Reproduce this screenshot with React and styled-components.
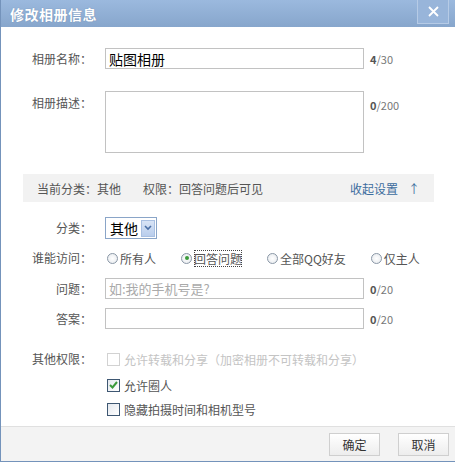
import React from 'react';
import styled, { createGlobalStyle } from 'styled-components';

const GlobalStyle = createGlobalStyle`
  html, body { margin: 0; padding: 0; background: #fff; }
  body { font-family: 'Noto Sans CJK SC', 'DejaVu Sans', sans-serif; }
`;

const Dialog = styled.div`
  width: 455px;
  height: 462px;
  box-sizing: border-box;
  border-left: 1px solid #7493bb;
  border-bottom: 1px solid #7493bb;
  display: flex;
  flex-direction: column;
  background: #fff;
  font-size: 12px;
  color: #555;
`;

const TitleBar = styled.div`
  height: 27px;
  flex: none;
  background: linear-gradient(#9bb9de, #87a6cc);
  display: flex;
  align-items: center;
  justify-content: space-between;
  padding: 0 6px 0 9px;
`;

const Title = styled.h1`
  margin: 0;
  font-size: 14px;
  font-weight: bold;
  color: #fff;
  letter-spacing: 0.5px;
  text-shadow: 0 0 1px rgba(60, 90, 130, 0.5);
`;

const CloseButton = styled.div`
  width: 32px;
  height: 24px;
  margin-top: -3px;
  box-sizing: border-box;
  border: 1px solid #b6cbe6;
  border-top: none;
  background: #98b5da;
  display: flex;
  align-items: center;
  justify-content: center;
`;

const Body = styled.div`
  flex: 1;
  padding-top: 21px;
`;

const Row = styled.div`
  display: grid;
  grid-template-columns: 91px 259px auto;
  column-gap: 13px;
  align-items: ${(p) => (p.top ? 'start' : 'center')};
  margin-top: ${(p) => p.gap || 0}px;
  min-height: ${(p) => p.h || 20}px;
`;

const Label = styled.label`
  text-align: right;
  font-size: 12px;
  color: #555;
  white-space: nowrap;
  line-height: 20px;
  padding-top: ${(p) => (p.top ? 2 : 0)}px;
`;

const TextInput = styled.div`
  height: 21px;
  box-sizing: border-box;
  border: 1px solid #c2c2c2;
  padding: 0 3px;
  display: flex;
  align-items: center;
  font-size: ${(p) => (p.placeholder ? 13 : 14)}px;
  color: ${(p) => (p.placeholder ? '#aaa' : '#000')};
`;

const TextArea = styled.div`
  height: 62px;
  box-sizing: border-box;
  border: 1px solid #c2c2c2;
`;

const Counter = styled.span`
  font-size: 11px;
  color: #777;
  margin-left: -7px;
  padding-top: ${(p) => (p.top ? 6 : 0)}px;
  b { color: #555; }
`;

const InfoBar = styled.div`
  margin: 21px 21px 0 22px;
  height: 28px;
  background: #f2f2f2;
  display: flex;
  align-items: center;
  padding: 0 14px;
  color: #555;
  font-size: 12px;
`;

const InfoText = styled.span`
  margin-right: ${(p) => p.mr || 0}px;
`;

const Toggle = styled.a`
  margin-left: auto;
  color: #3d6d9e;
  font-size: 12px;
  text-decoration: none;
  span { margin-left: 10px; }
`;

const Select = styled.div`
  width: 52px;
  height: 22px;
  box-sizing: border-box;
  border: 1px solid #8aa5c8;
  display: flex;
  align-items: center;
  justify-content: space-between;
  padding: 0 1px 0 4px;
  font-size: 14px;
  color: #000;
`;

const SelectArrow = styled.div`
  width: 14px;
  height: 17px;
  background: linear-gradient(#d8e4f6, #b9cdec);
  border: 1px solid #a9c0e2;
  box-sizing: border-box;
  display: flex;
  align-items: center;
  justify-content: center;
`;

const Options = styled.div`
  display: flex;
  gap: 25px;
  padding-left: 2px;
  white-space: nowrap;
`;

const Option = styled.span`
  display: flex;
  align-items: center;
  gap: 2px;
  color: #555;
`;

const Circle = styled.span`
  width: 11px;
  height: 11px;
  box-sizing: border-box;
  border-radius: 50%;
  border: 1px solid #8a97a6;
  background: radial-gradient(#fff, #e4e8ec);
  display: inline-flex;
  align-items: center;
  justify-content: center;
  &::after {
    content: '';
    width: 4px;
    height: 4px;
    border-radius: 50%;
    background: ${(p) => (p.on ? '#3a9a3a' : 'transparent')};
  }
`;

const Focus = styled.span`
  outline: 1px dotted #444;
  outline-offset: -1px;
  color: #555;
`;

const CheckList = styled.div`
  display: flex;
  flex-direction: column;
  grid-column: 2 / 4;
  padding-left: 2px;
`;

const CheckRow = styled.div`
  display: flex;
  align-items: center;
  gap: 4px;
  height: 20px;
  margin-top: ${(p) => p.gap || 0}px;
  color: ${(p) => (p.disabled ? '#c4c4c4' : '#555')};
  white-space: nowrap;
`;

const Box = styled.span`
  width: 13px;
  height: 13px;
  box-sizing: border-box;
  border: 1px solid ${(p) => (p.disabled ? '#d2d2d2' : '#3e5772')};
  background: ${(p) => (p.disabled ? '#fff' : 'linear-gradient(135deg, #e4e8ee, #fff)')};
  display: inline-flex;
  align-items: center;
  justify-content: center;
`;

const Footer = styled.div`
  height: 34px;
  flex: none;
  background: #f3f3f3;
  border-top: 1px solid #e0e0e0;
  display: flex;
  justify-content: flex-end;
  align-items: center;
  gap: 18px;
  padding-right: 6px;
`;

const Button = styled.button`
  width: 51px;
  height: 23px;
  border: 1px solid #cfcfcf;
  background: linear-gradient(#fff, #ededed);
  font-family: inherit;
  font-size: 12px;
  color: #333;
  padding: 0;
`;

const Radio = ({ label, on, focus }) => (
  <Option>
    <Circle on={on} />
    {focus ? <Focus>{label}</Focus> : label}
  </Option>
);

export default function App() {
  return (
    <>
      <GlobalStyle />
      <Dialog>
        <TitleBar>
          <Title>修改相册信息</Title>
          <CloseButton>
            <svg width="11" height="11" viewBox="0 0 11 11">
              <path d="M1 1L10 10M10 1L1 10" stroke="#fff" strokeWidth="1.8" />
            </svg>
          </CloseButton>
        </TitleBar>

        <Body>
          <Row h={21}>
            <Label>相册名称：</Label>
            <TextInput>贴图相册</TextInput>
            <Counter><b>4</b>/30</Counter>
          </Row>
          <Row gap={22} top>
            <Label top>相册描述：</Label>
            <TextArea />
            <Counter top><b>0</b>/200</Counter>
          </Row>

          <InfoBar>
            <InfoText mr={22}>当前分类：其他</InfoText>
            <InfoText>权限：回答问题后可见</InfoText>
            <Toggle>收起设置<span>↑</span></Toggle>
          </InfoBar>

          <Row gap={15} h={22}>
            <Label>分类：</Label>
            <Select>
              其他
              <SelectArrow>
                <svg width="8" height="6" viewBox="0 0 8 6">
                  <path d="M1 1L4 4L7 1" stroke="#4a6fa5" strokeWidth="1.6" fill="none" />
                </svg>
              </SelectArrow>
            </Select>
          </Row>
          <Row gap={9}>
            <Label>谁能访问：</Label>
            <Options>
              <Radio label="所有人" />
              <Radio label="回答问题" on focus />
              <Radio label="全部QQ好友" />
              <Radio label="仅主人" />
            </Options>
          </Row>
          <Row gap={10} h={21}>
            <Label>问题：</Label>
            <TextInput placeholder>如:我的手机号是?</TextInput>
            <Counter><b>0</b>/20</Counter>
          </Row>
          <Row gap={9} h={21}>
            <Label>答案：</Label>
            <TextInput />
            <Counter><b>0</b>/20</Counter>
          </Row>

          <Row gap={20} top>
            <Label>其他权限：</Label>
            <CheckList>
              <CheckRow disabled>
                <Box disabled />
                允许转载和分享（加密相册不可转载和分享）
              </CheckRow>
              <CheckRow gap={6}>
                <Box>
                  <svg width="9" height="8" viewBox="0 0 9 8">
                    <path d="M1 4L3.5 6.5L8 1" stroke="#3c9a3c" strokeWidth="2" fill="none" />
                  </svg>
                </Box>
                允许圈人
              </CheckRow>
              <CheckRow gap={4}>
                <Box />
                隐藏拍摄时间和相机型号
              </CheckRow>
            </CheckList>
          </Row>
        </Body>

        <Footer>
          <Button>确定</Button>
          <Button>取消</Button>
        </Footer>
      </Dialog>
    </>
  );
}
